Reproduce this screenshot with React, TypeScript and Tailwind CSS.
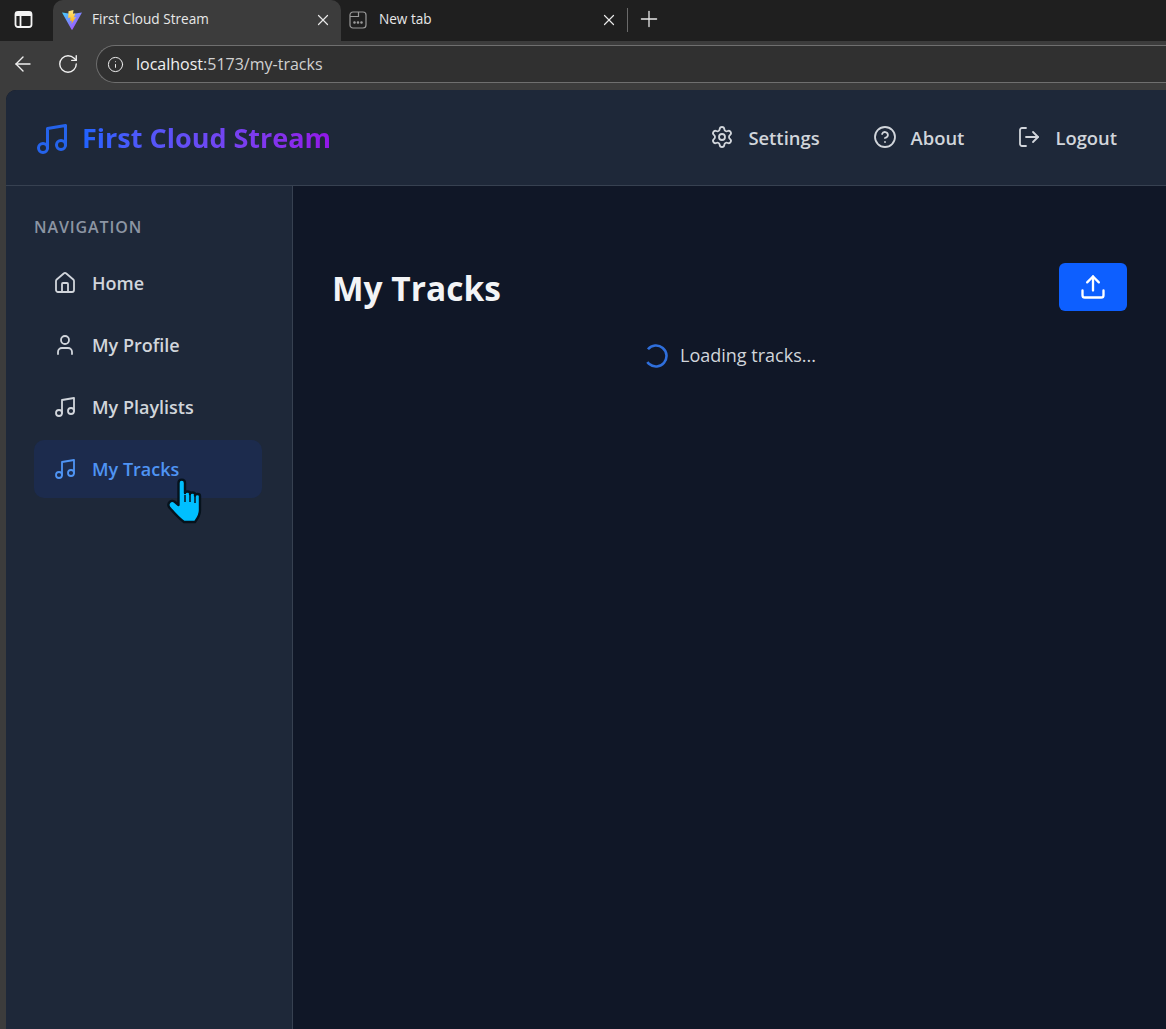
import React from "react";
import { CircleHelp, House, Info, LogOut, Music, Plus, RotateCw, Settings, Upload, User, X, ArrowLeft } from "lucide-react";

const font = "font-['Open_Sans','Noto_Sans',sans-serif]";

const ViteIcon = () => (
	<svg width="22" height="22" viewBox="0 0 22 22" className="shrink-0">
		<defs>
			<linearGradient id="viteBody" x1="0" y1="0" x2="1" y2="1">
				<stop offset="0" stopColor="#41d1ff" />
				<stop offset="1" stopColor="#bd34fe" />
			</linearGradient>
			<linearGradient id="viteBolt" x1="0" y1="0" x2="0" y2="1">
				<stop offset="0" stopColor="#ffea83" />
				<stop offset="1" stopColor="#ffa800" />
			</linearGradient>
		</defs>
		<path d="M1 3.5 L11 5 L21 3.5 L11.5 20.5 Q11 21 10.5 20.5 Z" fill="url(#viteBody)" />
		<path d="M12.5 1 L7.5 2.2 L7.2 9 L9.6 8.4 L9 12 L11 11.4 L10.4 15 L15 8 L12.6 8.5 L14.4 4.4 L12 4.8 Z" fill="url(#viteBolt)" />
	</svg>
);

const NewTabIcon = () => (
	<svg width="18" height="18" viewBox="0 0 18 18" fill="none" stroke="#9a9a9a" strokeWidth="1.2" className="shrink-0">
		<rect x="1" y="1" width="16" height="16" rx="3" />
		<path d="M1 5.5h8.5V1" />
		<circle cx="5.5" cy="11.5" r="0.7" fill="#9a9a9a" />
		<circle cx="9" cy="11.5" r="0.7" fill="#9a9a9a" />
		<circle cx="12.5" cy="11.5" r="0.7" fill="#9a9a9a" />
	</svg>
);

const HandCursor = () => (
	<svg width="50" height="52" viewBox="0 0 50 52" className="absolute left-[160px] top-[475px]">
		<path
			d="M18.5 8C18.5 3.5 25 3.5 25 8V18C25 16 30 16 30 18V19C30 17 35 17 35 19V20.5C35 18.5 40 18.5 40 21V35C40 41 37 44 35 47H24C20 44 14 38 9 32C7 28 11 24 15 27L18.5 30Z"
			fill="#00bfff"
			stroke="#06121c"
			strokeWidth="2.4"
			strokeLinejoin="round"
		/>
		<path d="M25 20v7M30 20v7M35 21v7" stroke="#06121c" strokeWidth="1.5" fill="none" />
	</svg>
);

const navItems = [
	{ label: "Home", icon: House },
	{ label: "My Profile", icon: User },
	{ label: "My Playlists", icon: Music },
	{ label: "My Tracks", icon: Music, active: true },
];

const topLinks = [
	{ label: "Settings", icon: Settings },
	{ label: "About", icon: CircleHelp },
	{ label: "Logout", icon: LogOut },
];

const App = () => {
	return (
		<div className={`${font} relative w-[1166px] h-[1029px] overflow-hidden flex flex-col bg-[#3c3c3c]`}>
			{/* browser tabs */}
			<div className="h-[41px] shrink-0 flex items-center bg-[#1f1f1f] text-[13.6px] text-[#e8e8e8]">
				<div className="w-[53px] h-full flex items-center justify-center pr-[6px] pb-[2px]">
					<svg width="19" height="19" viewBox="0 0 19 19" fill="none" stroke="#f4f4f4" strokeWidth="1.8">
						<rect x="1.5" y="2" width="16" height="15" rx="2.5" />
						<path d="M1.5 4.5h16" strokeWidth="3" />
						<path d="M6.5 5v12" />
					</svg>
				</div>
				<div className="w-[288px] h-full flex items-center bg-[#3c3c3c] rounded-t-[10px] pl-[8px] pr-[9px] pb-[2px]">
					<ViteIcon />
					<span className="ml-[9px] flex-1">First Cloud Stream</span>
					<X size={18} strokeWidth={1.6} />
				</div>
				<div className="w-[286px] h-full flex items-center pl-[8px] pr-[9px] pb-[2px]">
					<NewTabIcon />
					<span className="ml-[12px] flex-1">New tab</span>
					<X size={18} strokeWidth={1.6} />
				</div>
				<div className="w-px h-[24px] mb-[2px] bg-[#6a6a6a]" />
				<Plus size={26} strokeWidth={1.2} className="ml-[8px] mb-[3px]" />
			</div>

			{/* browser toolbar */}
			<div className="h-[49px] shrink-0 flex items-center pb-[3px] text-[#f0f0f0]">
				<ArrowLeft size={24} strokeWidth={1.4} className="ml-[11px]" />
				<RotateCw size={22} strokeWidth={1.5} className="ml-[22px]" />
				<div className="ml-[17px] flex-1 h-[38px] flex items-center rounded-l-full border border-r-0 border-[#6f6f6f] bg-[#303030] pl-[10px]">
					<Info size={17} strokeWidth={1.4} />
					<span className="ml-[12px] text-[16px]">
						localhost<span className="text-[#d0d0d0]">:5173/my-tracks</span>
					</span>
				</div>
			</div>

			{/* app */}
			<div className="flex-1 min-h-0 ml-[6px] rounded-tl-[10px] overflow-hidden flex flex-col bg-[#101727]">
				<header className="h-[96px] shrink-0 flex items-center justify-between bg-[#1e2839] border-b border-[#374151] pt-[2px] pl-[28px] pr-[49px]">
					<div className="flex items-center gap-[12px]">
						<Music size={36} className="text-[#2563eb]" />
						<span className="text-[27px] font-bold bg-gradient-to-r from-[#1d63ff] to-[#9314e8] bg-clip-text text-transparent">
							First Cloud Stream
						</span>
					</div>
					<nav className="flex items-center gap-[53px] mb-[2px] text-[#d1d5db] text-[18.4px] font-semibold">
						{topLinks.map((link) => (
							<a key={link.label} className="flex items-center gap-[14px]">
								<link.icon size={24} strokeWidth={1.8} />
								{link.label}
							</a>
						))}
					</nav>
				</header>

				<div className="flex-1 min-h-0 flex">
					<aside className="w-[287px] shrink-0 bg-[#1e2839] border-r border-[#374151] pt-[30px] pl-[28px] pr-[30px]">
						<h2 className="text-[16px] leading-[22px] tracking-[0.9px] font-semibold uppercase text-[#8c95a3]">Navigation</h2>
						<div className="mt-[16px] flex flex-col gap-[4px]">
							{navItems.map((item) => (
								<a
									key={item.label}
									className={`h-[58px] flex items-center gap-[15px] pl-[19px] rounded-[10px] text-[18px] font-semibold ${
										item.active ? "bg-[#1c2b4d] text-[#4f94f4]" : "text-[#d1d5db]"
									}`}
								>
									<item.icon size={24} strokeWidth={1.8} />
									{item.label}
								</a>
							))}
						</div>
					</aside>

					<main className="flex-1 min-w-0 pt-[77px] px-[39px]">
						<div className="h-[48px] flex items-center justify-between">
							<h1 className="text-[33.5px] pt-[2px] font-bold text-[#f3f4f6]">My Tracks</h1>
							<button className="w-[68px] h-[48px] flex items-center justify-center rounded-[6px] bg-[#0d5fff] text-white">
								<Upload size={28} strokeWidth={2} />
							</button>
						</div>
						<div className="mt-[31px] pl-[1px] flex items-center justify-center gap-[12px] text-[18px] text-[#d1d5db]">
							<svg width="24" height="24" viewBox="0 0 24 24" fill="none" stroke="#2f6fdc" strokeWidth="2.6">
								<circle cx="12" cy="12" r="10.5" strokeDasharray="52 14" transform="rotate(220 12 12)" />
							</svg>
							Loading tracks...
						</div>
					</main>
				</div>
			</div>

			<HandCursor />
		</div>
	);
};

export default App;
